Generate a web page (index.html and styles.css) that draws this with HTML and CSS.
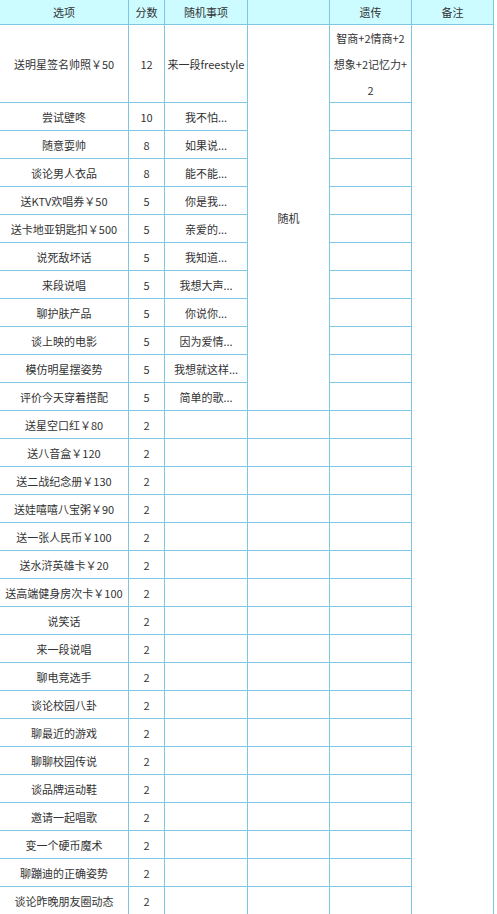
FILE: index.html
```html
<!DOCTYPE html>
<html lang="zh-CN">
<head>
<meta charset="utf-8">
<title>选项表</title>
<link rel="stylesheet" href="styles.css">
</head>
<body>
<div class="sheet">
  <div class="cell head">选项</div>
  <div class="cell head">分数</div>
  <div class="cell head">随机事项</div>
  <div class="cell head"></div>
  <div class="cell head">遗传</div>
  <div class="cell head">备注</div>

  <div class="cell merged-random">随机</div>
  <div class="cell merged-note"></div>

  <div class="cell">送明星签名帅照￥50</div><div class="cell">12</div><div class="cell">来一段freestyle</div><div class="cell wrap">智商+2情商+2想象+2记忆力+2</div>
  <div class="cell">尝试壁咚</div><div class="cell">10</div><div class="cell">我不怕...</div><div class="cell"></div>
  <div class="cell">随意耍帅</div><div class="cell">8</div><div class="cell">如果说...</div><div class="cell"></div>
  <div class="cell">谈论男人衣品</div><div class="cell">8</div><div class="cell">能不能...</div><div class="cell"></div>
  <div class="cell">送KTV欢唱券￥50</div><div class="cell">5</div><div class="cell">你是我...</div><div class="cell"></div>
  <div class="cell">送卡地亚钥匙扣￥500</div><div class="cell">5</div><div class="cell">亲爱的...</div><div class="cell"></div>
  <div class="cell">说死敌坏话</div><div class="cell">5</div><div class="cell">我知道...</div><div class="cell"></div>
  <div class="cell">来段说唱</div><div class="cell">5</div><div class="cell">我想大声...</div><div class="cell"></div>
  <div class="cell">聊护肤产品</div><div class="cell">5</div><div class="cell">你说你...</div><div class="cell"></div>
  <div class="cell">谈上映的电影</div><div class="cell">5</div><div class="cell">因为爱情...</div><div class="cell"></div>
  <div class="cell">模仿明星摆姿势</div><div class="cell">5</div><div class="cell">我想就这样...</div><div class="cell"></div>
  <div class="cell">评价今天穿着搭配</div><div class="cell">5</div><div class="cell">简单的歌...</div><div class="cell"></div>

  <div class="cell">送星空口红￥80</div><div class="cell">2</div><div class="cell"></div><div class="cell"></div><div class="cell"></div>
  <div class="cell">送八音盒￥120</div><div class="cell">2</div><div class="cell"></div><div class="cell"></div><div class="cell"></div>
  <div class="cell">送二战纪念册￥130</div><div class="cell">2</div><div class="cell"></div><div class="cell"></div><div class="cell"></div>
  <div class="cell">送娃嘻嘻八宝粥￥90</div><div class="cell">2</div><div class="cell"></div><div class="cell"></div><div class="cell"></div>
  <div class="cell">送一张人民币￥100</div><div class="cell">2</div><div class="cell"></div><div class="cell"></div><div class="cell"></div>
  <div class="cell">送水浒英雄卡￥20</div><div class="cell">2</div><div class="cell"></div><div class="cell"></div><div class="cell"></div>
  <div class="cell">送高端健身房次卡￥100</div><div class="cell">2</div><div class="cell"></div><div class="cell"></div><div class="cell"></div>
  <div class="cell">说笑话</div><div class="cell">2</div><div class="cell"></div><div class="cell"></div><div class="cell"></div>
  <div class="cell">来一段说唱</div><div class="cell">2</div><div class="cell"></div><div class="cell"></div><div class="cell"></div>
  <div class="cell">聊电竞选手</div><div class="cell">2</div><div class="cell"></div><div class="cell"></div><div class="cell"></div>
  <div class="cell">谈论校园八卦</div><div class="cell">2</div><div class="cell"></div><div class="cell"></div><div class="cell"></div>
  <div class="cell">聊最近的游戏</div><div class="cell">2</div><div class="cell"></div><div class="cell"></div><div class="cell"></div>
  <div class="cell">聊聊校园传说</div><div class="cell">2</div><div class="cell"></div><div class="cell"></div><div class="cell"></div>
  <div class="cell">谈品牌运动鞋</div><div class="cell">2</div><div class="cell"></div><div class="cell"></div><div class="cell"></div>
  <div class="cell">邀请一起唱歌</div><div class="cell">2</div><div class="cell"></div><div class="cell"></div><div class="cell"></div>
  <div class="cell">变一个硬币魔术</div><div class="cell">2</div><div class="cell"></div><div class="cell"></div><div class="cell"></div>
  <div class="cell">聊蹦迪的正确姿势</div><div class="cell">2</div><div class="cell"></div><div class="cell"></div><div class="cell"></div>
  <div class="cell">谈论昨晚朋友圈动态</div><div class="cell">2</div><div class="cell"></div><div class="cell"></div><div class="cell"></div>
</div>
</body>
</html>
```
FILE: styles.css
```css
html, body {
  margin: 0;
  padding: 0;
  background: #ffffff;
}

body {
  font-family: "Noto Sans CJK SC", "Noto Sans", sans-serif;
  font-size: 11px;
  color: #333333;
}

.sheet {
  display: grid;
  width: max-content;
  grid-template-columns: 128px 35px 82px 81px 81px 81px;
  grid-template-rows: 24px 77px repeat(29, 27px);
  gap: 1px;
  padding: 0 1px 1px 0;
  background: #7fc6e4;
}

.cell {
  background: #ffffff;
  display: flex;
  align-items: center;
  justify-content: center;
  text-align: center;
  white-space: nowrap;
  line-height: 26px;
  overflow: hidden;
}

.head {
  background: #ccfcff;
}

.wrap {
  white-space: normal;
  padding: 0 2px;
  word-break: break-all;
}

.merged-random {
  grid-column: 4;
  grid-row: 2 / span 12;
}

.merged-note {
  grid-column: 6;
  grid-row: 2 / span 30;
}
```
